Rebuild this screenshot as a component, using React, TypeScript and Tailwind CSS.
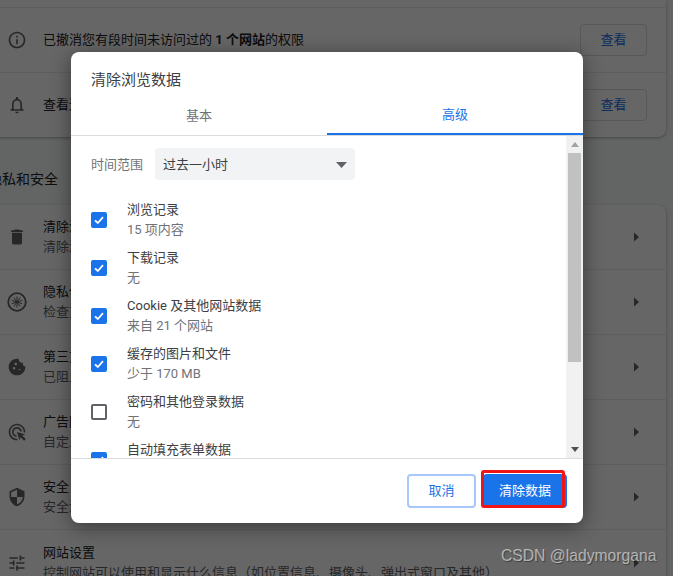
import React from "react";
import { MdInfoOutline, MdNotificationsNone, MdDelete, MdCookie, MdAdsClick, MdSecurity, MdTune } from "react-icons/md";

function Caret() {
  return (
    <svg width="5" height="10" viewBox="0 0 5 10" className="shrink-0">
      <path d="M0 0.5 L5 5 L0 9.5 Z" fill="#5f6368" />
    </svg>
  );
}

function PrivacyIcon() {
  return (
    <svg width="20" height="20" viewBox="0 0 20 20" fill="none" stroke="#5f6368">
      <circle cx="10" cy="10" r="8.8" strokeWidth="1.8" />
      <path d="M10 4.5V15.5M4.8 8.3L15.2 11.7M4.8 11.7L15.2 8.3M6.8 5.6L13.2 14.4M13.2 5.6L6.8 14.4" strokeWidth="1" />
    </svg>
  );
}

function ViewButton() {
  return (
    <button className="w-[67px] h-[32px] border border-[#dadce0] rounded text-[13px] text-[#1a73e8] bg-white">查看</button>
  );
}

function SettingRow({ icon, title, sub, last }: { icon: React.ReactNode; title: string; sub: string; last?: boolean }) {
  return (
    <div className={`h-[65px] flex items-center pl-[27px] pr-[27px] ${last ? "" : "border-b border-[#e8eaed]"}`}>
      <div className="w-[20px] h-[20px] flex items-center justify-center shrink-0 text-[#5f6368]">{icon}</div>
      <div className="ml-[16px] flex-1 min-w-0">
        <div className="text-[13px] leading-[20px] text-[#202124] whitespace-nowrap">{title}</div>
        <div className="text-[13px] leading-[20px] text-[#5f6368] whitespace-nowrap">{sub}</div>
      </div>
      <Caret />
    </div>
  );
}

function Check({ checked }: { checked: boolean }) {
  return checked ? (
    <div className="w-[16px] h-[16px] rounded-[2px] bg-[#1a73e8] flex items-center justify-center shrink-0">
      <svg width="12" height="12" viewBox="0 0 12 12" fill="none" stroke="white" strokeWidth="1.8">
        <path d="M2 6.3L4.8 9L10 3.2" />
      </svg>
    </div>
  ) : (
    <div className="w-[16px] h-[16px] rounded-[2px] border-2 border-[#5f6368] bg-white shrink-0" />
  );
}

function DataRow({ title, sub, checked }: { title: string; sub?: string; checked: boolean }) {
  return (
    <div className="h-[48px] flex items-center gap-[20px] shrink-0">
      <Check checked={checked} />
      <div>
        <div className="text-[13px] leading-[20px] text-[#3c4043]">{title}</div>
        <div className="h-[20px] text-[13px] leading-[20px] text-[#6f7378]">{sub}</div>
      </div>
    </div>
  );
}

export default function App() {
  const font = { fontFamily: 'Roboto, "Noto Sans CJK SC", sans-serif' };
  return (
    <div className="relative w-[673px] h-[576px] overflow-hidden bg-[#f8f9fa]" style={font}>
      <div className="-ml-[20px] w-[686px] flex flex-col">
        <div className="bg-white rounded-b-lg shadow-[0_1px_3px_rgba(60,64,67,0.4)]">
          <div className="h-[8px] border-b border-[#e8eaed]" />
          <div className="h-[65px] flex items-center pl-[27px] pr-[19px] border-b border-[#e8eaed]">
            <div className="w-[20px] flex justify-center text-[#5f6368] shrink-0"><MdInfoOutline size={20} /></div>
            <div className="ml-[16px] flex-1 text-[13px] text-[#202124] whitespace-nowrap">
              已撤消您有段时间未访问过的 <b>1 个网站</b>的权限
            </div>
            <ViewButton />
          </div>
          <div className="h-[64px] flex items-center pl-[27px] pr-[19px]">
            <div className="w-[20px] flex justify-center text-[#5f6368] shrink-0"><MdNotificationsNone size={22} /></div>
            <div className="ml-[16px] flex-1 text-[13px] text-[#202124] whitespace-nowrap">查看通</div>
            <ViewButton />
          </div>
        </div>
        <div className="h-[68px] pt-[16px] flex items-center pl-[8px] text-[14px] text-[#202124]">隐私和安全</div>
        <div className="bg-white rounded-t-lg shadow-[0_1px_3px_rgba(60,64,67,0.4)]">
          <SettingRow icon={<MdDelete size={22} />} title="清除浏" sub="清除浏" />
          <SettingRow icon={<PrivacyIcon />} title="隐私保" sub="检查重" />
          <SettingRow icon={<MdCookie size={22} />} title="第三方" sub="已阻止" />
          <SettingRow icon={<MdAdsClick size={20} />} title="广告隐" sub="自定义" />
          <SettingRow icon={<MdSecurity size={20} />} title="安全" sub="安全浏" />
          <SettingRow icon={<MdTune size={20} />} title="网站设置" sub="控制网站可以使用和显示什么信息（如位置信息、摄像头、弹出式窗口及其他）" last />
        </div>
      </div>

      <div className="absolute inset-0 bg-black/60" />

      <div className="absolute left-[71px] top-[52px] w-[512px] h-[471px] bg-white rounded-lg flex flex-col overflow-hidden shadow-[0_4px_20px_rgba(0,0,0,0.45)]">
        <div className="pl-[20px] pt-[16px] text-[15px] leading-[24px] text-[#3c4043] h-[43px] shrink-0">清除浏览数据</div>
        <div className="flex border-b border-[#dadce0] shrink-0 h-[41px]">
          <div className="flex-1 flex items-center justify-center pt-[1px] text-[13px] text-[#6f7378]">基本</div>
          <div className="flex-1 flex items-center justify-center pt-[1px] text-[13px] text-[#1a73e8] border-b-2 border-[#1a73e8]">高级</div>
        </div>
        <div className="flex flex-1 min-h-0">
          <div className="flex-1 min-w-0 overflow-hidden pl-[20px] pt-[12px] flex flex-col">
            <div className="flex items-center gap-[12px] shrink-0">
              <span className="text-[13px] text-[#6f7378] pt-[1px]">时间范围</span>
              <div className="w-[200px] h-[32px] rounded bg-[#f1f3f4] flex items-center justify-between pl-[8px] pr-[8px] pt-[1px] text-[13px] text-[#3c4043]">
                <span>过去一小时</span>
                <svg width="11" height="6" viewBox="0 0 11 6"><path d="M0 0H11L5.5 6Z" fill="#5f6368" /></svg>
              </div>
            </div>
            <div className="mt-[16px] flex flex-col">
              <DataRow checked title="浏览记录" sub="15 项内容" />
              <DataRow checked title="下载记录" sub="无" />
              <DataRow checked title="Cookie 及其他网站数据" sub="来自 21 个网站" />
              <DataRow checked title="缓存的图片和文件" sub="少于 170 MB" />
              <DataRow checked={false} title="密码和其他登录数据" sub="无" />
              <DataRow checked title="自动填充表单数据" />
            </div>
          </div>
          <div className="w-[17px] shrink-0 bg-[#f1f1f1] flex flex-col items-center">
            <div className="h-[17px] flex items-center justify-center shrink-0">
              <svg width="8" height="5" viewBox="0 0 8 5"><path d="M0 5H8L4 0Z" fill="#a3a3a3" /></svg>
            </div>
            <div className="w-[13px] h-[209px] bg-[#c1c1c1] shrink-0" />
            <div className="flex-1" />
            <div className="h-[17px] flex items-center justify-center shrink-0">
              <svg width="8" height="5" viewBox="0 0 8 5"><path d="M0 0H8L4 5Z" fill="#505050" /></svg>
            </div>
          </div>
        </div>
        <div className="h-[65px] shrink-0 border-t border-[#dadce0] flex justify-end items-start pt-[15px] pr-[16px] gap-[7px]">
          <button className="w-[69px] h-[34px] rounded border-2 border-[#a8c7fa] text-[13px] text-[#1a73e8] bg-white">取消</button>
          <button className="w-[84px] h-[34px] rounded bg-[#1a73e8] text-[13px] text-white">清除数据</button>
        </div>
      </div>

      <div className="absolute left-[481px] top-[470px] w-[84px] h-[38px] border-[3px] border-[#f01414] rounded-[3px]" />

      <div
        className="absolute left-[501px] top-[546px] text-[15.7px] leading-[20px] text-white/55 whitespace-nowrap [text-shadow:1px_1px_1px_rgba(0,0,0,0.4)]"
        style={{ fontFamily: '"Liberation Sans", sans-serif' }}
      >
        CSDN @ladymorgana
      </div>
    </div>
  );
}
